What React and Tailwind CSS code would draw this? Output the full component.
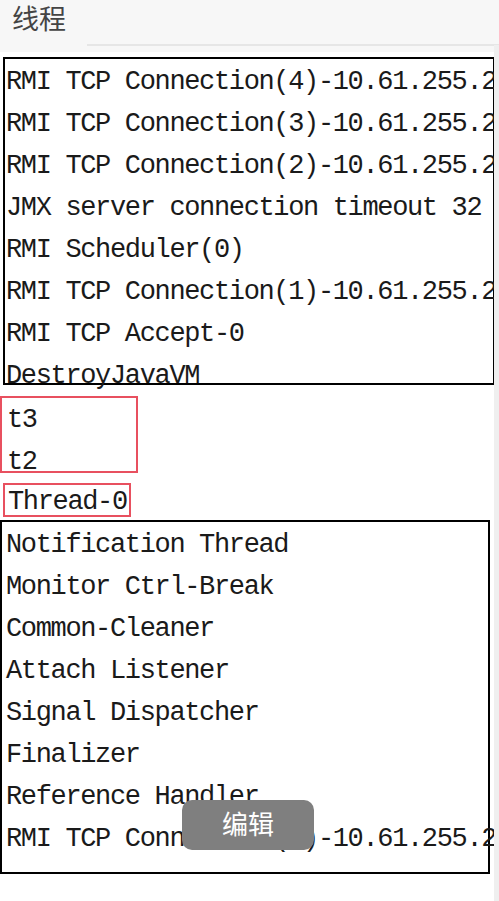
const groupA = [
  'RMI TCP Connection(4)-10.61.255.2',
  'RMI TCP Connection(3)-10.61.255.2',
  'RMI TCP Connection(2)-10.61.255.2',
  'JMX server connection timeout 32',
  'RMI Scheduler(0)',
  'RMI TCP Connection(1)-10.61.255.2',
  'RMI TCP Accept-0',
  'DestroyJavaVM',
];

const groupB = [
  'Notification Thread',
  'Monitor Ctrl-Break',
  'Common-Cleaner',
  'Attach Listener',
  'Signal Dispatcher',
  'Finalizer',
  'Reference Handler',
  'RMI TCP Connection(5)-10.61.255.2',
];

function Line({ children }) {
  return <div className="h-[42px] whitespace-nowrap leading-[42px]">{children}</div>;
}

export default function App() {
  return (
    <div className="relative h-[901px] w-[499px] overflow-hidden bg-white">
      <div className="h-[52px] bg-[#f7f7f7]">
        <div className="flex h-[36px] items-center pl-3 font-['Noto_Sans_CJK_SC',sans-serif] text-[27px] text-[#444]">
          线程
        </div>
        <div className="ml-[87px] mt-[8px] h-[2px] bg-[#e6e6e6]" />
      </div>

      <div className="font-['Liberation_Mono',monospace] text-[27px] tracking-[-1.35px] text-[#1a1a1a]">
        <div className="ml-[3px] mt-[5px] h-[328px] w-[492px] border-2 border-black pl-px">
          <div className="mt-[2px]">
            {groupA.map((t) => (
              <Line key={t}>{t}</Line>
            ))}
          </div>
        </div>

        <div className="mt-[11px] h-[77px] w-[138px] border-2 border-[#e8505f] pl-[5px]">
          <div className="mt-px">
            <Line>t3</Line>
            <Line>t2</Line>
          </div>
        </div>

        <div className="ml-[3px] mt-[10px] flex h-[34px] w-[128px] items-center border-2 border-[#e8505f] pl-[3px] pt-[4px]">
          Thread-0
        </div>

        <div className="mt-[3px] h-[354px] w-[490px] border-2 border-black pl-[4px]">
          <div className="mt-[2px]">
            {groupB.map((t) => (
              <Line key={t}>{t}</Line>
            ))}
          </div>
        </div>
      </div>

      <div className="absolute right-0 top-[45px] h-[856px] w-[5px] bg-[#efefef]" />

      <div className="absolute left-[182px] top-[800px] flex h-[50px] w-[132px] items-center justify-center rounded-[10px] bg-[#7f7f7f] pb-[6px] font-['Noto_Sans_CJK_SC',sans-serif] text-[26px] text-white">
        编辑
      </div>
    </div>
  );
}
